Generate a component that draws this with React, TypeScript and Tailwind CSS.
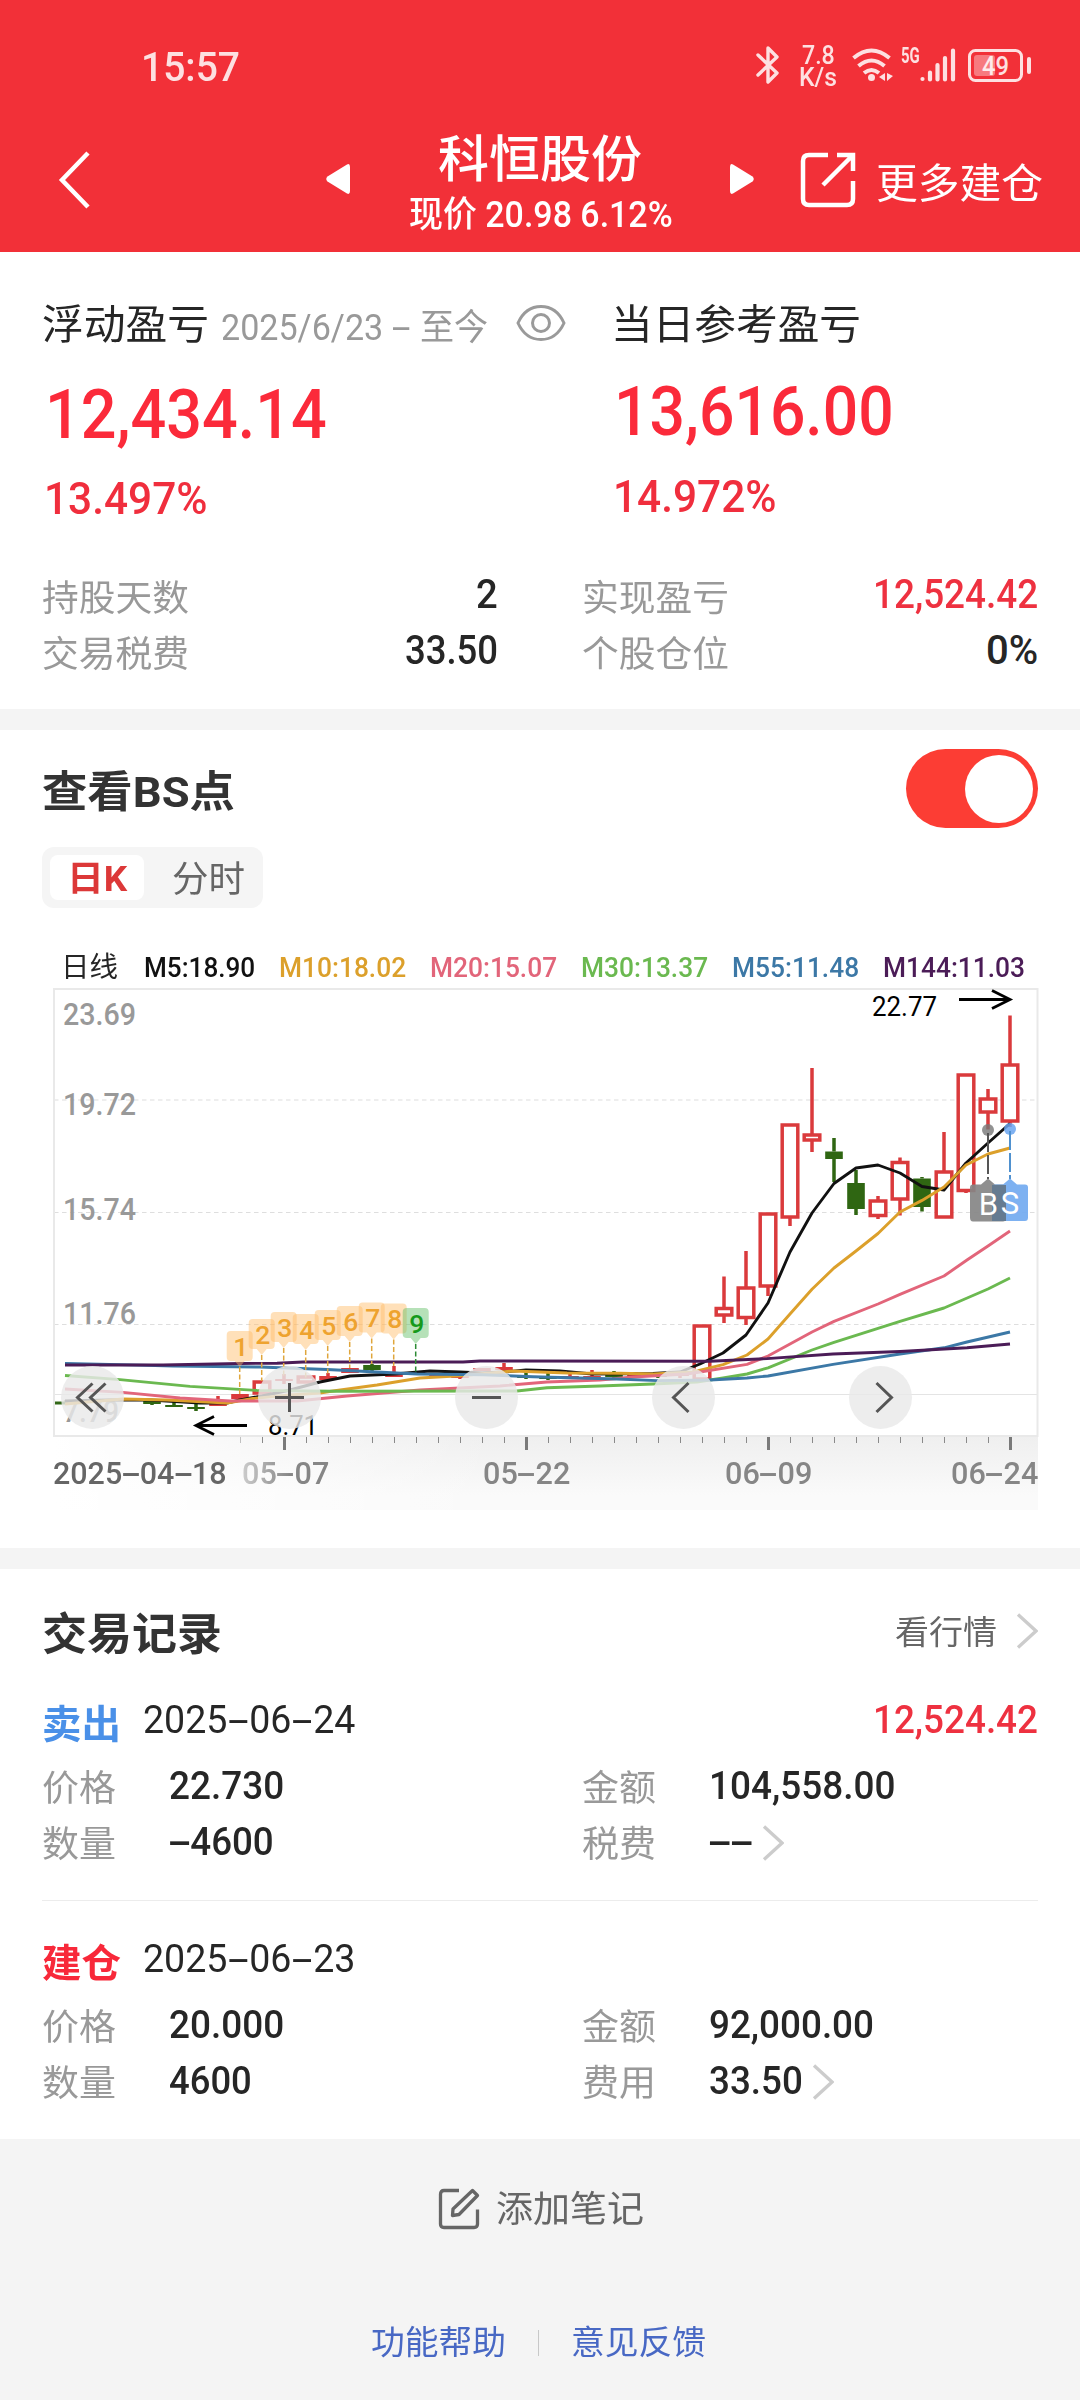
import { useLayoutEffect, useRef, useState } from 'react';
import type { ReactNode } from 'react';

/** Single-line text condensed or widened horizontally to a fixed width. */
function Fit({ w, className = '', children }: { w: number; className?: string; children: string }) {
  const ref = useRef<HTMLSpanElement>(null);
  const [scale, setScale] = useState(1);
  useLayoutEffect(() => {
    if (ref.current) setScale(w / ref.current.offsetWidth);
  }, [w, children]);
  const parts = children.split(/(-)/);
  return (
    <span className="block shrink-0" style={{ width: w }}>
      <span
        ref={ref}
        className={`inline-block origin-left align-top whitespace-pre ${className}`}
        style={{ transform: `scaleX(${scale})` }}
      >
        {parts.map((p, i) =>
          p === '-' ? (
            <span key={i} className="inline-block w-[0.58em] scale-x-[2] text-center">
              -
            </span>
          ) : (
            p
          ),
        )}
      </span>
    </span>
  );
}

function Chevron({ className = '' }: { className?: string }) {
  return (
    <svg viewBox="0 0 22 36" className={`h-9 w-[22px] shrink-0 ${className}`} fill="none" stroke="#cccccc" strokeWidth="3.300">
      <path d="M2 1.5 20 18 2 34.5" />
    </svg>
  );
}

function StatusBar() {
  return (
    <div className="flex h-[134px] items-center pl-[141px] text-white/85">
      <Fit w={99} className="text-[41px] leading-[41px] font-medium">15:57</Fit>
      <svg viewBox="0 0 26 40" className="ml-[515px] h-10 w-[26px] -mt-1" fill="none" stroke="currentColor" strokeWidth="3.400" strokeLinejoin="round" strokeLinecap="round">
        <path d="M3 10 22 28 13 37V3L22 12 3 30" />
      </svg>
      <div className="-mt-0.5 ml-[18px] w-[38px] text-[26px] leading-[22px] font-medium">
        <div className="pl-[3px]"><Fit w={33}>7.8</Fit></div>
        <Fit w={38}>K/s</Fit>
      </div>
      <svg viewBox="852 46 44 38" className="-mt-1 ml-[15px] h-[38px] w-11" fill="none" stroke="currentColor" strokeWidth="4">
        <path d="M853.500 58Q871.500 43 889.500 58M858.500 66Q871.500 55 884.500 66M864 73Q871.500 67 879 73" />
        <circle cx="871.500" cy="77.500" r="3.500" fill="currentColor" stroke="none" />
        <path d="M885 73v8l-6-4zM887 73v8l6-5z" fill="currentColor" stroke="none" />
      </svg>
      <div className="-mt-1 ml-[5px] flex h-[38px] items-start gap-px">
        <Fit w={19} className="text-[22px] leading-5 font-bold">5G</Fit>
        <svg viewBox="918 46 38 38" className="-ml-0.5 h-[38px] w-[38px]" stroke="currentColor" strokeWidth="4.200" strokeLinecap="round">
          <path d="M921.500 79v0M929 72.500v7M936.500 65v14.500M944 58v21.500M952 50.500v29" />
        </svg>
      </div>
      <svg viewBox="964 46 70 40" className="-mt-0.5 ml-2 h-10 w-[70px]">
        <rect x="968.500" y="50.500" width="52" height="30" rx="6" fill="none" stroke="currentColor" strokeWidth="3" />
        <rect x="973" y="55" width="21" height="21" rx="3" fill="currentColor" opacity=".42" />
        <rect x="1026" y="57" width="4" height="17" rx="2" fill="currentColor" />
        <text x="981" y="75" fontSize="25" fontWeight="500" fill="currentColor" textLength="27" lengthAdjust="spacingAndGlyphs">49</text>
      </svg>
    </div>
  );
}

function TitleBar() {
  return (
    <div className="flex h-[118px] items-start text-white">
      <svg viewBox="0 0 34 58" className="mt-[17px] ml-[58px] h-[58px] w-[34px]" fill="none" stroke="currentColor" strokeWidth="4.500">
        <path d="M30 2 4 29l26 27" />
      </svg>
      <svg viewBox="0 0 26 32" className="mt-[29px] ml-[233px] h-8 w-[26px]" fill="currentColor">
        <path d="M22 1.500Q25 0 25 4v24q0 4-3 2.500L2.500 18.500Q0 16 2.500 13.500z" />
      </svg>
      <div className="ml-[56px] w-[266px]">
        <div className="pl-[31px]">
          <Fit w={204} className="text-[50px] leading-[52px] font-medium">科恒股份</Fit>
        </div>
        <div className="pt-0.5 pl-0.5">
          <Fit w={264} className="text-[36px] leading-[54px] font-medium">现价 20.98 6.12%</Fit>
        </div>
      </div>
      <svg viewBox="0 0 26 32" className="mt-[29px] ml-[56px] h-8 w-[26px]" fill="currentColor">
        <path d="M4 1.500Q1 0 1 4v24q0 4 3 2.500l19.500-12q2.500-2.500 0-5z" />
      </svg>
      <svg viewBox="0 0 56 58" className="mt-[17px] ml-[45px] h-[58px] w-14" fill="none" stroke="currentColor" strokeWidth="4.500">
        <path d="M28 4H9Q3 4 3 10v38q0 6 6 6h38q6 0 6-6V30M37 4h16v16M52 5 23 34" />
      </svg>
      <div className="mt-[22px] ml-5">
        <Fit w={167} className="text-[41px] leading-[56px]">更多建仓</Fit>
      </div>
    </div>
  );
}

function Stat({ label, value, w, red = false }: { label: string; value: string; w: number; red?: boolean }) {
  return (
    <div className="flex h-14 items-center justify-between">
      <Fit w={147} className="text-[36px] leading-[56px] text-[#999999]">{label}</Fit>
      <div className="pb-[8px]">
        <Fit w={w} className={`text-[40px] leading-[48px] font-medium ${red ? 'text-[#ee3140]' : 'text-[#262626]'}`}>{value}</Fit>
      </div>
    </div>
  );
}

function Summary() {
  return (
    <section className="h-[457px] bg-white px-[42px] pt-[45px]">
      <div className="grid grid-cols-[570px_1fr]">
        <div>
          <div className="flex h-14 items-center">
            <Fit w={167} className="text-[41px] leading-[58px] text-[#262626]">浮动盈亏</Fit>
            <div className="ml-[12px] pt-1.5">
              <Fit w={267} className="text-[36px] leading-[50px] text-[#999999]">2025/6/23 - 至今</Fit>
            </div>
            <svg viewBox="0 0 50 38" className="-mt-1 ml-[28px] h-[38px] w-[50px]" fill="none" stroke="#9a9a9a" strokeWidth="3">
              <path d="M2 19C7 8 15 2.500 25 2.500S43 8 48 19C43 30 35 35.500 25 35.500S7 30 2 19z" />
              <circle cx="25" cy="19" r="8.500" />
            </svg>
          </div>
          <div className="mt-[22px] ml-[3px]">
            <Fit w={282} className="text-[68px] leading-[80px] font-medium text-[#fb2a3a]">12,434.14</Fit>
          </div>
          <div className="mt-[12px] ml-0.5">
            <Fit w={164} className="text-[45px] leading-[64px] font-medium text-[#f02e3d]">13.497%</Fit>
          </div>
        </div>
        <div>
          <div className="flex h-14 items-center">
            <Fit w={250} className="-ml-px text-[41px] leading-[58px] text-[#262626]">当日参考盈亏</Fit>
          </div>
          <div className="mt-[19px] ml-[2px]">
            <Fit w={280} className="text-[68px] leading-[80px] font-medium text-[#fb2a3a]">13,616.00</Fit>
          </div>
          <div className="mt-[13px] ml-px">
            <Fit w={164} className="text-[45px] leading-[64px] font-medium text-[#f02e3d]">14.972%</Fit>
          </div>
        </div>
      </div>
      <div className="mt-[40px] grid grid-cols-[456px_456px] justify-between">
        <Stat label="持股天数" value="2" w={22} />
        <Stat label="实现盈亏" value="12,524.42" w={165} red />
        <Stat label="交易税费" value="33.50" w={93} />
        <Stat label="个股仓位" value="0%" w={52} />
      </div>
    </section>
  );
}

type Candle = [x: number, high: number, low: number, top: number, bottom: number, kind: 'up' | 'down' | 'flat'];

const candles: Candle[] = [
  [152, 1401, 1405, 1401, 1404, 'down'],
  [174, 1402, 1407, 1405, 1407, 'down'],
  [196, 1404, 1411, 1407, 1409, 'down'],
  [218, 1396, 1405, 1403, 1406, 'flat'],
  [240, 1394, 1399, 1394, 1399, 'flat'],
  [262, 1382, 1394, 1382, 1393, 'up'],
  [284, 1374, 1384, 1379, 1381, 'flat'],
  [306, 1377, 1383, 1377, 1382, 'up'],
  [328, 1373, 1380, 1376, 1380, 'flat'],
  [350, 1368, 1373, 1368, 1373, 'flat'],
  [372, 1364, 1371, 1365, 1370, 'down'],
  [394, 1366, 1377, 1374, 1377, 'flat'],
  [416, 1372, 1375, 1373, 1375, 'down'],
  [438, 1374, 1378, 1375, 1378, 'flat'],
  [460, 1376, 1379, 1376, 1378, 'flat'],
  [482, 1368, 1371, 1368, 1371, 'flat'],
  [504, 1363, 1371, 1367, 1370, 'flat'],
  [526, 1369, 1379, 1376, 1378, 'down'],
  [548, 1372, 1380, 1377, 1379, 'down'],
  [570, 1372, 1379, 1376, 1378, 'flat'],
  [592, 1370, 1381, 1376, 1378, 'flat'],
  [614, 1371, 1378, 1375, 1377, 'down'],
  [636, 1372, 1378, 1375, 1377, 'flat'],
  [658, 1372, 1378, 1375, 1377, 'down'],
  [680, 1372, 1378, 1374, 1376, 'flat'],
  [702, 1325, 1379, 1326, 1379, 'up'],
  [724, 1276.500, 1323, 1308.500, 1315, 'up'],
  [746, 1251, 1325, 1288, 1317.500, 'up'],
  [768, 1213, 1296, 1214, 1286, 'up'],
  [790, 1124, 1226, 1125, 1217, 'up'],
  [812, 1068, 1152, 1135, 1140, 'up'],
  [834, 1138, 1182, 1151.500, 1159, 'down'],
  [856, 1170, 1215, 1183, 1209, 'down'],
  [878, 1196, 1219, 1201, 1215.500, 'up'],
  [900, 1157.500, 1215.500, 1162.500, 1199, 'up'],
  [922, 1177, 1211.500, 1178.500, 1207, 'down'],
  [944, 1132, 1217, 1172, 1217, 'up'],
  [966, 1074, 1193, 1075, 1190.500, 'up'],
  [988, 1089, 1129.500, 1099, 1112, 'up'],
  [1010, 1015.500, 1127, 1065, 1121, 'up'],
];

const averages = [
  { color: '#111111', pts: '65,1401 110,1400 150,1400 200,1403 227,1403 240,1400 262,1396 290,1390 320,1382 350,1376 395,1374 430,1371 460,1372 482,1373 504,1372 526,1370 560,1371 592,1374 653,1373.5 680,1372 700,1364 723,1353 746,1335 768,1303 790,1252 812,1213 834,1183.5 856,1168 878,1165 900,1173 922,1186.5 944,1190 966,1163 988,1143 1010,1123.5' },
  { color: '#dca02b', pts: '65,1404 123,1399 167,1400 227,1403 253,1398.5 290,1395 320,1393 333,1391 377,1385 420,1378 460,1375.7 513,1371 567,1373 620,1373.3 653,1374 693,1372 723,1364.7 747,1355 768,1339 790,1314 812,1289.3 834,1268 856,1251 878,1233.5 900,1212 922,1200.4 944,1187 966,1165 988,1154 1010,1148' },
  { color: '#e2657a', pts: '65,1389 123,1392.4 180,1398 230,1401 297,1401 347,1396 420,1390 500,1386 547,1382 600,1380 633,1377 687,1374 700,1372 747,1364.4 768,1356 812,1332 834,1321.4 878,1304 900,1294.4 944,1276 967,1260 988,1246 1010,1231' },
  { color: '#6bb950', pts: '65,1375.5 120,1379.6 190,1386.4 257,1390.4 333,1391.3 517,1391 547,1387.7 600,1386 653,1384 697,1382 723,1378 747,1374 768,1367.8 812,1350 834,1342.4 900,1321.4 944,1308 988,1289 1010,1278' },
  { color: '#3c78a6', pts: '65,1363.4 110,1364.4 173,1366 260,1367 327,1369.5 417,1374 483,1374.7 533,1376.7 617,1379 657,1380.6 710,1380 747,1378 768,1376 833,1364.4 900,1354 944,1347.8 967,1342 1010,1332' },
  { color: '#4b1c57', pts: '65,1365 163,1365 240,1363.5 277,1363.3 303,1362 463,1362 480,1361 710,1361.3 767,1358.6 833,1354 900,1351.5 967,1347.8 1010,1344' },
];

// Nine-count markers: top of the badge and end of its dashed stem.
const counts: [number, number][] = [
  [1331, 1394],
  [1319, 1381],
  [1312, 1376],
  [1314, 1378],
  [1310, 1374],
  [1306, 1368],
  [1302.5, 1364],
  [1303.5, 1366],
  [1308, 1374],
];

const levels: [string, number][] = [
  ['23.69', 1025],
  ['19.72', 1115],
  ['15.74', 1220],
  ['11.76', 1324],
  ['7.79', 1422],
];

const ticks = Array.from({ length: 36 }, (_, i) => 240.5 + i * 22);

function RoundButton({ cx, children }: { cx: number; children: ReactNode }) {
  return (
    <g>
      <circle cx={cx} cy="1397.500" r="31.500" fill="#e9e9e9" fillOpacity=".82" />
      <g transform={`translate(${cx} 1397.5)`} fill="none" stroke="#555555" strokeWidth="3">
        {children}
      </g>
    </g>
  );
}

function CandleChart() {
  return (
    <svg viewBox="42 984 998 468" className="block h-[468px] w-[998px]">
      <g stroke="#dedede" strokeWidth="1.200" strokeDasharray="4.500 3.500">
        <path d="M54 1100h984M54 1212.500h984M54 1324.500h984" />
      </g>
      <path d="M54 1394.500h984" stroke="#e4e4e4" strokeWidth="1" />
      <rect x="54" y="989" width="983.500" height="447" fill="none" stroke="#e9e9e9" strokeWidth="2" />
      <g fontSize="31.500" fontWeight="500" fill="#999999">
        {levels.map(([t, y]) => (
          <text key={t} x="63" y={y} textLength={t === '7.79' ? 56 : 73} lengthAdjust="spacingAndGlyphs">{t}</text>
        ))}
      </g>
      <path d="M55 1403h13" stroke="#326817" strokeWidth="3" />
      {candles.map(([x, high, low, top, bottom, kind]) => {
        const color = kind === 'down' ? '#2f6612' : '#da3a3c';
        const hollow = kind === 'up';
        return (
          <g key={x} stroke={color} strokeWidth="3.500">
            <path d={`M${x} ${high}V${top}M${x} ${bottom}V${low}`} />
            <rect
              x={x - (hollow ? 7.8 : 8.8)}
              y={top}
              width={hollow ? 15.6 : 17.6}
              height={bottom - top}
              fill={hollow ? '#ffffff' : color}
              strokeWidth={hollow ? 3.5 : 0}
            />
          </g>
        );
      })}
      <g fill="none" strokeWidth="2.900" strokeLinejoin="round">
        {averages.map((a) => (
          <polyline key={a.color} points={a.pts} stroke={a.color} />
        ))}
      </g>
      {counts.map(([top, end], i) => {
        const x = 239.7 + i * 22;
        const last = i === 8;
        return (
          <g key={x}>
            <path d={`M${x} ${top + 36}V${end}`} stroke={last ? '#2c8a34' : '#dfa63c'} strokeWidth="1.500" strokeDasharray="5 2.500" />
            <path
              d={`M${x - 9} ${top}h18q4 0 4 4v22q0 4-4 4h-4l-5 6-5-6h-4q-4 0-4-4v-22q0-4 4-4z`}
              fill={last ? '#5fbe64' : '#ffbb66'}
              fillOpacity=".46"
            />
            <text x={x + 1} y={top + 24.5} textAnchor="middle" fontSize="26.500" fontWeight="500" fill={last ? '#159a1c' : '#eea32f'}>
              {i + 1}
            </text>
          </g>
        );
      })}
      <g fill="none" stroke="#000000" strokeWidth="2.800">
        <path d="M959 999.500h50M992 990.500l18 9-18 9" />
        <path d="M247 1425.500h-51M214 1416.500l-18 9 18 9" />
      </g>
      <g fontSize="27.500" fill="#000000">
        <text x="872" y="1016" textLength="65" lengthAdjust="spacingAndGlyphs">22.77</text>
        <text x="268" y="1435" textLength="50" lengthAdjust="spacingAndGlyphs">8.71</text>
      </g>
      <circle cx="988" cy="1130" r="6" fill="#777777" fillOpacity=".8" />
      <circle cx="1010" cy="1129" r="6" fill="#6aa5f0" fillOpacity=".85" />
      <path d="M988 1133v46" stroke="#555555" strokeWidth="2" strokeDasharray="19 3" />
      <path d="M1010 1131v48" stroke="#4f91cf" strokeWidth="2" strokeDasharray="19 3" />
      <path d="M1003 1184.500h-8l-7-6-7 6h-8q-3 0-3 3v30q0 4 3 4h30q3 0 3-4v-30q0-3-3-3z" fill="#868686" fillOpacity=".92" />
      <path d="M1025 1184.500h-8l-7-6-7 6h-8q-3 0-3 3v30q0 3.500 3 3.500h30q3 0 3-3.500v-30q0-3-3-3z" fill="#73abf0" fillOpacity=".93" />
      <path d="M992 1185h14v36h-14z" fill="#657b91" />
      <g fontSize="31" fill="#ffffff" textAnchor="middle">
        <text x="988.500" y="1214.500">B</text>
        <text x="1010" y="1213.500">S</text>
      </g>
      <RoundButton cx={92.5}>
        <path d="M0-14-15 0 0 14M13-14-2 0 13 14" />
      </RoundButton>
      <RoundButton cx={289.5}>
        <path d="M-14.500 0h29M0-14.500v29" />
      </RoundButton>
      <RoundButton cx={486.5}>
        <path d="M-14.500 0h29" />
      </RoundButton>
      <RoundButton cx={683.5}>
        <path d="M5-14.500-10 0 5 14.500" />
      </RoundButton>
      <RoundButton cx={880.5}>
        <path d="M-4-14.500 11 0-4 14.500" />
      </RoundButton>
      <g stroke="#8a8a8a">
        {ticks.map((x, i) =>
          i % 11 === 2 ? (
            <path key={x} d={`M${x} 1437v13`} strokeWidth="3" stroke="#7a7a7a" />
          ) : (
            <path key={x} d={`M${x} 1437v6`} strokeWidth="1" opacity={i === 0 ? 0.5 : 1} />
          ),
        )}
      </g>
    </svg>
  );
}

function ChartSection() {
  const date = 'text-[32px] leading-[46px] font-medium text-[#868686]';
  return (
    <section className="h-[818px] bg-white pt-[19px] pl-[42px]">
      <div className="flex h-[79px] w-[996px] items-center justify-between">
        <div className="pt-1.5">
          <Fit w={193} className="text-[43px] leading-[56px] font-bold text-[#333333]">查看BS点</Fit>
        </div>
        <div className="flex h-[79px] w-[132px] items-center justify-end rounded-full bg-[#fc3d34] pr-[5px]">
          <div className="size-[68px] rounded-full bg-white" />
        </div>
      </div>
      <div className="mt-[19px] flex h-[61px] w-[221px] items-center rounded-xl bg-[#f5f5f5] pl-2">
        <div className="flex h-[45px] w-[94px] items-center justify-center rounded-lg bg-white pt-1">
          <Fit w={60} className="text-[35px] leading-[44px] font-bold text-[#dc3838]">日K</Fit>
        </div>
        <div className="ml-[28px] pt-1">
          <Fit w={73} className="text-[36px] leading-[44px] text-[#666666]">分时</Fit>
        </div>
      </div>
      <div className="mt-[40px] flex h-10 items-center pl-[19px] text-[28px] leading-10 font-medium">
        <Fit w={57} className="font-normal text-[#262626]">日线</Fit>
        <div className="ml-[26px]"><Fit w={111} className="text-[#111111]">M5:18.90</Fit></div>
        <div className="ml-6"><Fit w={127} className="text-[#dca02b]">M10:18.02</Fit></div>
        <div className="ml-6"><Fit w={127} className="text-[#e2657a]">M20:15.07</Fit></div>
        <div className="ml-6"><Fit w={127} className="text-[#6bb950]">M30:13.37</Fit></div>
        <div className="ml-6"><Fit w={127} className="text-[#3c78a6]">M55:11.48</Fit></div>
        <div className="ml-6"><Fit w={142} className="text-[#4b1c57]">M144:11.03</Fit></div>
      </div>
      <div className="-mt-1 ml-3 flex h-0 w-[984px] items-start">
        <div className="mt-[453px] h-[73px] w-full shrink-0 bg-[linear-gradient(to_right,#ffffff,#ffffff00_45%),linear-gradient(to_bottom,#efefef,#fafafa_80%)]" />
      </div>
      <div className="relative">
        <CandleChart />
        <div className="-mt-0.5 flex h-[46px] items-center pl-[11px]">
          <Fit w={174} className="text-[32px] leading-[46px] font-medium text-[#666666]">2025-04-18</Fit>
          <div className="ml-[15px] [mask-image:linear-gradient(to_right,#00000066,#000000_55%)]">
            <Fit w={87} className={date}>05-07</Fit>
          </div>
          <div className="ml-[154px]"><Fit w={87} className={date}>05-22</Fit></div>
          <div className="ml-[155px]"><Fit w={87} className={date}>06-09</Fit></div>
          <div className="ml-[139px]"><Fit w={87} className={date}>06-24</Fit></div>
        </div>
      </div>
    </section>
  );
}

function Field({ label, value, w, arrow = false }: { label: string; value: string; w: number; arrow?: boolean }) {
  return (
    <div className="flex h-14 items-center">
      <div className="pt-[3px]">
        <Fit w={74} className="text-[36px] leading-[53px] text-[#999999]">{label}</Fit>
      </div>
      <div className="ml-[53px] flex items-center pb-[5px]">
        <Fit w={w} className="text-[39.500px] leading-[50px] font-medium text-[#262626]">{value}</Fit>
        {arrow && <Chevron className="mt-0.5 ml-[9px]" />}
      </div>
    </div>
  );
}

function TradeHead({ kind, date, amount, tone }: { kind: string; date: string; amount?: string; tone: string }) {
  return (
    <div className="flex h-14 items-center">
      <div className="pt-[3px]">
        <Fit w={79} className={`text-[38.500px] leading-[53px] font-bold ${tone}`}>{kind}</Fit>
      </div>
      <div className="ml-[22px] flex flex-1 items-center justify-between pb-[6px]">
        <Fit w={212} className="text-[39.500px] leading-[50px] text-[#262626]">{date}</Fit>
        {amount && <Fit w={165} className="text-[39.500px] leading-[50px] font-medium text-[#ee3140]">{amount}</Fit>}
      </div>
    </div>
  );
}

function Trades() {
  return (
    <section className="h-[570px] bg-white px-[42px] pt-9">
      <div className="flex h-14 items-center justify-between">
        <div className="pt-[5px]">
          <Fit w={180} className="text-[44px] leading-[51px] font-bold text-[#333333]">交易记录</Fit>
        </div>
        <div className="flex items-center">
          <Fit w={102} className="text-[33px] leading-[52px] text-[#666666]">看行情</Fit>
          <Chevron className="mb-1 ml-[19px]" />
        </div>
      </div>
      <div className="mt-[34px]">
        <TradeHead kind="卖出" date="2025-06-24" amount="12,524.42" tone="text-[#4a90e8]" />
      </div>
      <div className="mt-[9px] grid grid-cols-[540px_1fr]">
        <Field label="价格" value="22.730" w={115} />
        <Field label="金额" value="104,558.00" w={186} />
        <Field label="数量" value="-4600" w={105} />
        <Field label="税费" value="--" w={44} arrow />
      </div>
      <div className="mt-[28px] h-px bg-[#ececec]" />
      <div className="mt-[33px]">
        <TradeHead kind="建仓" date="2025-06-23" tone="text-[#f8293a]" />
      </div>
      <div className="mt-[9px] grid grid-cols-[540px_1fr]">
        <Field label="价格" value="20.000" w={115} />
        <Field label="金额" value="92,000.00" w={165} />
        <Field label="数量" value="4600" w={83} />
        <Field label="费用" value="33.50" w={94} arrow />
      </div>
    </section>
  );
}

function Footer() {
  return (
    <footer>
      <div className="flex h-[138px] items-center justify-center pt-px pl-0.5">
        <svg viewBox="0 0 42 42" className="h-[42px] w-[42px]" fill="none" stroke="#666666" strokeWidth="3.300" strokeLinejoin="round">
          <path d="M21 2.500H6q-3.500 0-3.500 3.500v30q0 3.500 3.500 3.500h30q3.500 0 3.500-3.500V21.500M34.500 2.500l5 5L21 26.500l-6.500 1 .5-6.500z" />
        </svg>
        <div className="ml-4 pt-0.5">
          <Fit w={148} className="text-[36.500px] leading-[56px] text-[#666666]">添加笔记</Fit>
        </div>
      </div>
      <div className="mt-[38px] flex h-14 items-center justify-center pr-[3px] text-[33.500px] leading-[56px] text-[#4868c4]">
        <Fit w={135}>功能帮助</Fit>
        <div className="mx-8 h-[26px] w-px bg-[#c8c8c8]" />
        <Fit w={135}>意见反馈</Fit>
      </div>
    </footer>
  );
}

export default function App() {
  return (
    <main className="h-[2400px] w-[1080px] overflow-hidden bg-[#f4f4f4] font-['Roboto','Noto_Sans_CJK_SC',sans-serif]">
      <header className="bg-[#f23038]">
        <StatusBar />
        <TitleBar />
      </header>
      <Summary />
      <div className="h-[21px]" />
      <ChartSection />
      <div className="h-[21px]" />
      <Trades />
      <Footer />
    </main>
  );
}
